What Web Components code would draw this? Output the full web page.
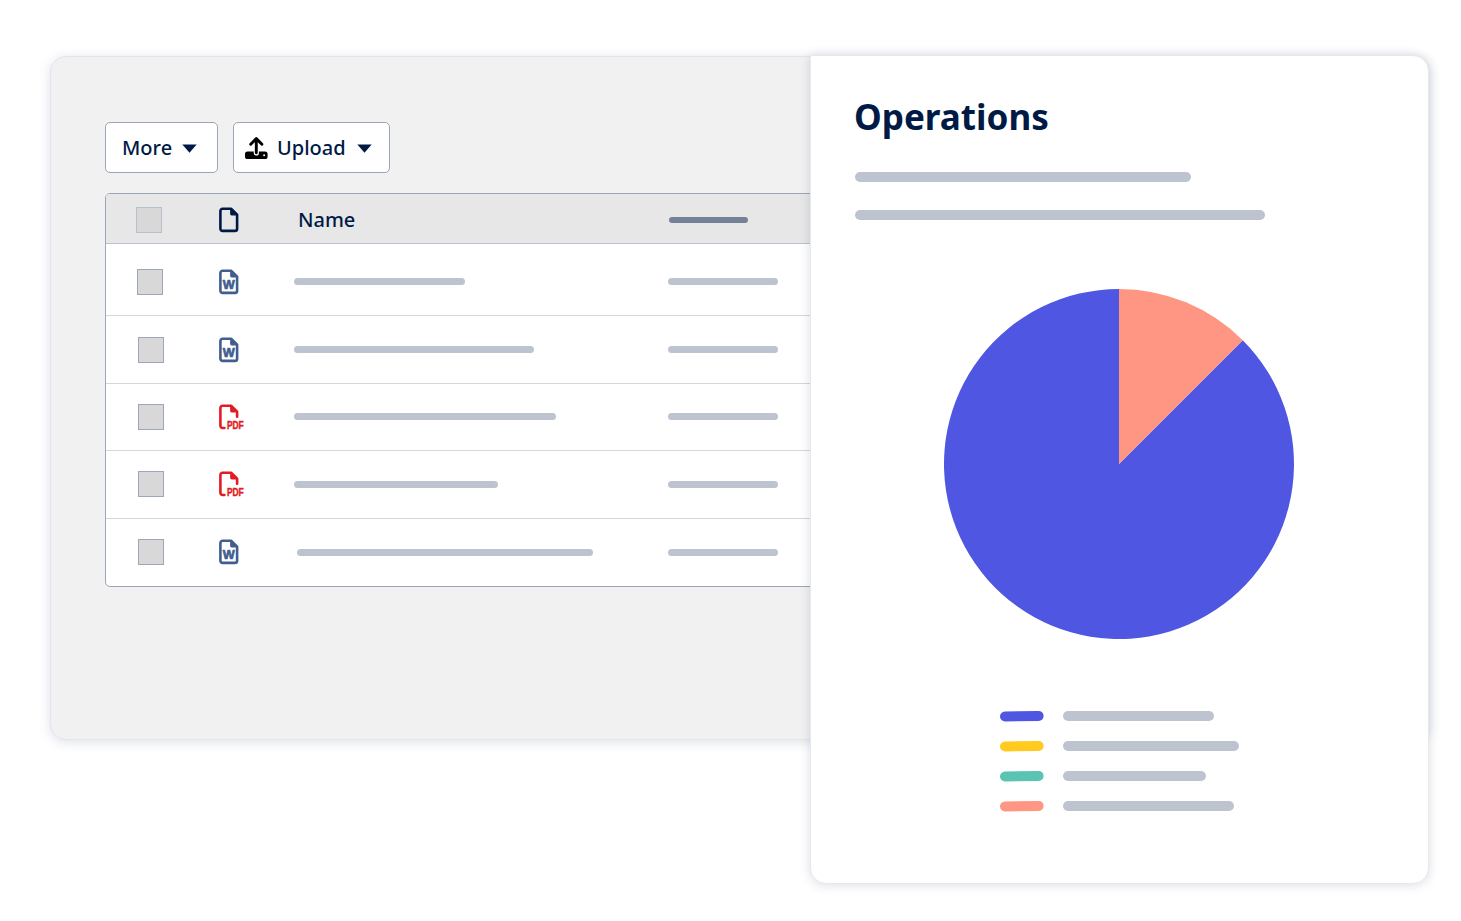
<!DOCTYPE html>
<html lang="en">
<head>
<meta charset="utf-8">
<title>Operations</title>
<style>
html, body {
  margin: 0;
  height: 100%;
  overflow: hidden;
  background: #fff;
}
body {
  font-family: "Noto Sans", "Open Sans", sans-serif;
  color: #001a45;
}
</style>
</head>
<body>
<ops-board>
  <files-panel>
    <menu-button slot="actions" label="More"></menu-button>
    <menu-button slot="actions" label="Upload" icon="upload"></menu-button>
    <file-row head icon="blank" box="30.4" mark="112.8" meta="79">Name</file-row>
    <file-row first icon="word" box="31" name="171"></file-row>
    <file-row icon="word" box="31.5" name="240"></file-row>
    <file-row icon="pdf" box="32" name="262"></file-row>
    <file-row icon="pdf" box="32" name="204"></file-row>
    <file-row icon="word" box="32" name="296" shift="3"></file-row>
  </files-panel>
  <report-panel heading="Operations">
    <pie-chart></pie-chart>
    <legend-item slot="legend" color="#4f57e2" width="150.6"></legend-item>
    <legend-item slot="legend" color="#ffcb21" width="175.6"></legend-item>
    <legend-item slot="legend" color="#5ac3b1" width="142.6"></legend-item>
    <legend-item slot="legend" color="#ff9683" width="170.6"></legend-item>
  </report-panel>
</ops-board>

<script>
const icons = {
  upload: `<svg width="24" height="24" viewBox="0 0 24 24" aria-hidden="true">
    <rect x="1" y="15.5" width="22.6" height="7.6" rx="2.6" fill="#000"/>
    <path d="M12.3 17V10" fill="none" stroke="#fff" stroke-width="5.2" stroke-linecap="round"/>
    <path d="M12.3 16.8V3.2M6.7 8.2l5.6-5.6 5.6 5.6" fill="none" stroke="#000" stroke-width="2.9" stroke-linecap="round" stroke-linejoin="round"/>
    <circle cx="20.1" cy="19.2" r="1" fill="#fff"/>
  </svg>`,
  blank: `<svg width="28" height="28" viewBox="0 0 28 28" fill="none" stroke="#001a45" aria-hidden="true">
    <path d="M4.6 2.8h8.7l5.8 5.8v14.1a2.2 2.2 0 0 1-2.2 2.2H4.6a2.2 2.2 0 0 1-2.2-2.2V5a2.2 2.2 0 0 1 2.2-2.2z" stroke-width="2.6" stroke-linejoin="round"/>
    <path d="M12.1 2v5.8a1.6 1.6 0 0 0 1.6 1.6h6.2z" fill="#001a45" stroke="none"/>
  </svg>`,
  word: `<svg width="28" height="28" viewBox="0 0 28 28" fill="none" stroke="#415e8e" aria-hidden="true">
    <path d="M4.6 2.8h8.7l5.8 5.8v14.1a2.2 2.2 0 0 1-2.2 2.2H4.6a2.2 2.2 0 0 1-2.2-2.2V5a2.2 2.2 0 0 1 2.2-2.2z" stroke-width="2.6" stroke-linejoin="round"/>
    <path d="M12.1 2v5.8a1.6 1.6 0 0 0 1.6 1.6h6.2z" fill="#415e8e" stroke="none"/>
    <text x="10.8" y="21.4" text-anchor="middle" textLength="12" lengthAdjust="spacingAndGlyphs" font-family="Liberation Sans, sans-serif" font-weight="700" font-size="12.8" fill="#415e8e" stroke-width=".7" stroke-linejoin="round">W</text>
  </svg>`,
  pdf: `<svg width="28" height="28" viewBox="0 0 28 28" fill="none" stroke="#e31b23" aria-hidden="true">
    <path d="M6.4 25H4.6a2.2 2.2 0 0 1-2.2-2.2V5a2.2 2.2 0 0 1 2.2-2.2h8.7l5.8 5.8v5.2" stroke-width="2.6" stroke-linejoin="round" stroke-linecap="round"/>
    <path d="M12.1 2v5.8a1.6 1.6 0 0 0 1.6 1.6h6.2z" fill="#e31b23" stroke="none"/>
    <text x="8.9" y="25.9" textLength="16.8" lengthAdjust="spacingAndGlyphs" font-family="Liberation Sans, sans-serif" font-weight="700" font-size="10" fill="#e31b23" stroke-width=".4">PDF</text>
  </svg>`
};

class OpsBoard extends HTMLElement {
  constructor () {
    super();
    this.attachShadow({mode: 'open'}).innerHTML = `
      <style>
      /* the report shares the second column with the files panel behind it */
      :host {
        display: grid;
        grid-template-columns: 760px 619px;
        grid-template-rows: 829px;
        align-items: start;
        padding: 55px 0 0 50px;
      }
      ::slotted(files-panel) { grid-area: 1 / 1 / 2 / 3; }
      ::slotted(report-panel) { grid-area: 1 / 2 / 2 / 3; z-index: 1; }
      </style>
      <slot></slot>`;
  }
}
customElements.define('ops-board', OpsBoard);

class FilesPanel extends HTMLElement {
  constructor () {
    super();
    this.attachShadow({mode: 'open'}).innerHTML = `
      <style>
      :host {
        display: block;
        box-sizing: border-box;
        height: 684.4px;
        margin-top: 1px;
        padding: 65px 0 0 54px;
        border: 1px solid #e2e5ec;
        border-radius: 16px;
        background: #f1f1f1;
        box-shadow: 0 2px 12px rgba(40, 60, 110, .16);
      }
      .actions { display: flex; gap: 15px; margin-bottom: 20px; }
      .table {
        box-sizing: border-box;
        height: 393.6px;
        border: 1px solid #9ba6b8;
        border-radius: 5px;
        background: #fff;
        overflow: hidden;
      }
      </style>
      <div class="actions"><slot name="actions"></slot></div>
      <div class="table"><slot></slot></div>`;
  }
}
customElements.define('files-panel', FilesPanel);

class MenuButton extends HTMLElement {
  connectedCallback () {
    const icon = icons[this.getAttribute('icon')] || '';
    this.attachShadow({mode: 'open'}).innerHTML = `
      <style>
      :host { display: block; }
      button {
        display: flex;
        align-items: center;
        box-sizing: border-box;
        height: 51px;
        width: ${icon ? 157.4 : 113}px;
        padding: 1px 0 0 ${icon ? 10 : 16}px;
        border: 1px solid #9ba6b8;
        border-radius: 5px;
        background: #fff;
        color: inherit;
        font: 500 20px/1 "Noto Sans", sans-serif;
      }
      svg { flex: none; }
      .label { margin-left: ${icon ? 9 : 0}px; }
      .caret { margin: 1px 0 0 ${icon ? 11.2 : 9.6}px; }
      </style>
      <button>${icon}<span class="label">${this.getAttribute('label')}</span>
        <svg class="caret" width="15" height="9" viewBox="0 0 15 9"><path d="M.3.5h14.4L7.5 8.7z" fill="#001a45"/></svg>
      </button>`;
  }
}
customElements.define('menu-button', MenuButton);

class FileRow extends HTMLElement {
  connectedCallback () {
    const head = this.hasAttribute('head');
    const box = Number(this.getAttribute('box'));
    const mark = Number(this.getAttribute('mark') || 113);
    const shift = Number(this.getAttribute('shift') || 0);
    const name = this.getAttribute('name');
    this.attachShadow({mode: 'open'}).innerHTML = `
      <style>
      :host {
        display: grid;
        grid-template-columns: ${mark - box - 1}px ${189.3 - mark}px 374px 1fr;
        align-items: center;
        box-sizing: border-box;
        height: 67.4px;
        padding-left: ${box}px;
        border-bottom: 1px solid #d3d7df;
      }
      :host([head]) {
        height: 50px;
        padding-top: 3px;
        border-bottom: 1.5px solid #bbc1cf;
        background: #e7e7e7;
      }
      :host([first]) { height: 72.4px; padding-top: 4.6px; }
      :host(:last-child) { border-bottom: 0; }
      .box {
        box-sizing: border-box;
        width: 26px;
        height: 26px;
        border: 1px solid ${head ? '#b9bfcd' : '#9ca7ba'};
        background: #d8d8d8;
      }
      svg { display: block; overflow: visible; }
      .name { font-size: 20px; font-weight: 500; line-height: 1; padding-left: 3.7px; }
      .bar { height: 7px; border-radius: 4px; background: #bdc4d0; }
      .title { width: ${name}px; margin-left: ${shift}px; }
      .meta { width: ${this.getAttribute('meta') || 110}px; }
      :host([head]) .meta { height: 6px; background: #758197; margin-left: .5px; }
      </style>
      <div class="box"></div>
      ${icons[this.getAttribute('icon')]}
      ${head ? '<div class="name"><slot></slot></div>' : '<div class="bar title"></div>'}
      <div class="bar meta"></div>`;
  }
}
customElements.define('file-row', FileRow);

class ReportPanel extends HTMLElement {
  connectedCallback () {
    this.attachShadow({mode: 'open'}).innerHTML = `
      <style>
      :host {
        display: block;
        box-sizing: border-box;
        height: 829px;
        padding: 39px 0 0 44px;
        border: 1px solid #e6e8ee;
        border-radius: 0 16px 16px 16px;
        background: #fff;
        box-shadow: 0 1px 11px rgba(30, 45, 80, .17);
      }
      h1 { margin: 0 0 0 -1px; font-size: 35.1px; font-weight: 700; line-height: 42px; }
      .line { height: 10px; border-radius: 5px; background: #bdc4d0; }
      .short { width: 336px; margin-top: 34.6px; }
      .long { width: 410px; margin-top: 28px; }
      .chart { margin: 69px 0 0 89px; }
      .legend {
        display: flex;
        flex-direction: column;
        gap: 20px;
        margin: 72.4px 0 0 145px;
      }
      </style>
      <h1>${this.getAttribute('heading')}</h1>
      <div class="line short"></div>
      <div class="line long"></div>
      <div class="chart"><slot></slot></div>
      <div class="legend"><slot name="legend"></slot></div>`;
  }
}
customElements.define('report-panel', ReportPanel);

class PieChart extends HTMLElement {
  constructor () {
    super();
    this.attachShadow({mode: 'open'}).innerHTML = `
      <style>
      :host, svg { display: block; }
      </style>
      <svg width="350" height="350" viewBox="0 0 350 350">
        <path d="M175 175V0a175 175 0 1 0 123.74 51.26z" fill="#4f57e2"/>
        <path d="M175 175V0a175 175 0 0 1 123.74 51.26z" fill="#ff9683"/>
      </svg>`;
  }
}
customElements.define('pie-chart', PieChart);

class LegendItem extends HTMLElement {
  connectedCallback () {
    this.attachShadow({mode: 'open'}).innerHTML = `
      <style>
      :host { display: flex; align-items: center; gap: 19px; height: 10px; }
      svg { display: block; overflow: visible; }
      .bar {
        width: ${this.getAttribute('width')}px;
        height: 10px;
        border-radius: 5px;
        background: #bdc4d0;
      }
      </style>
      <svg width="44" height="10"><path d="M5 5.4L38.6 4.9" stroke="${this.getAttribute('color')}" stroke-width="10" stroke-linecap="round"/></svg>
      <div class="bar"></div>`;
  }
}
customElements.define('legend-item', LegendItem);
</script>
</body>
</html>
